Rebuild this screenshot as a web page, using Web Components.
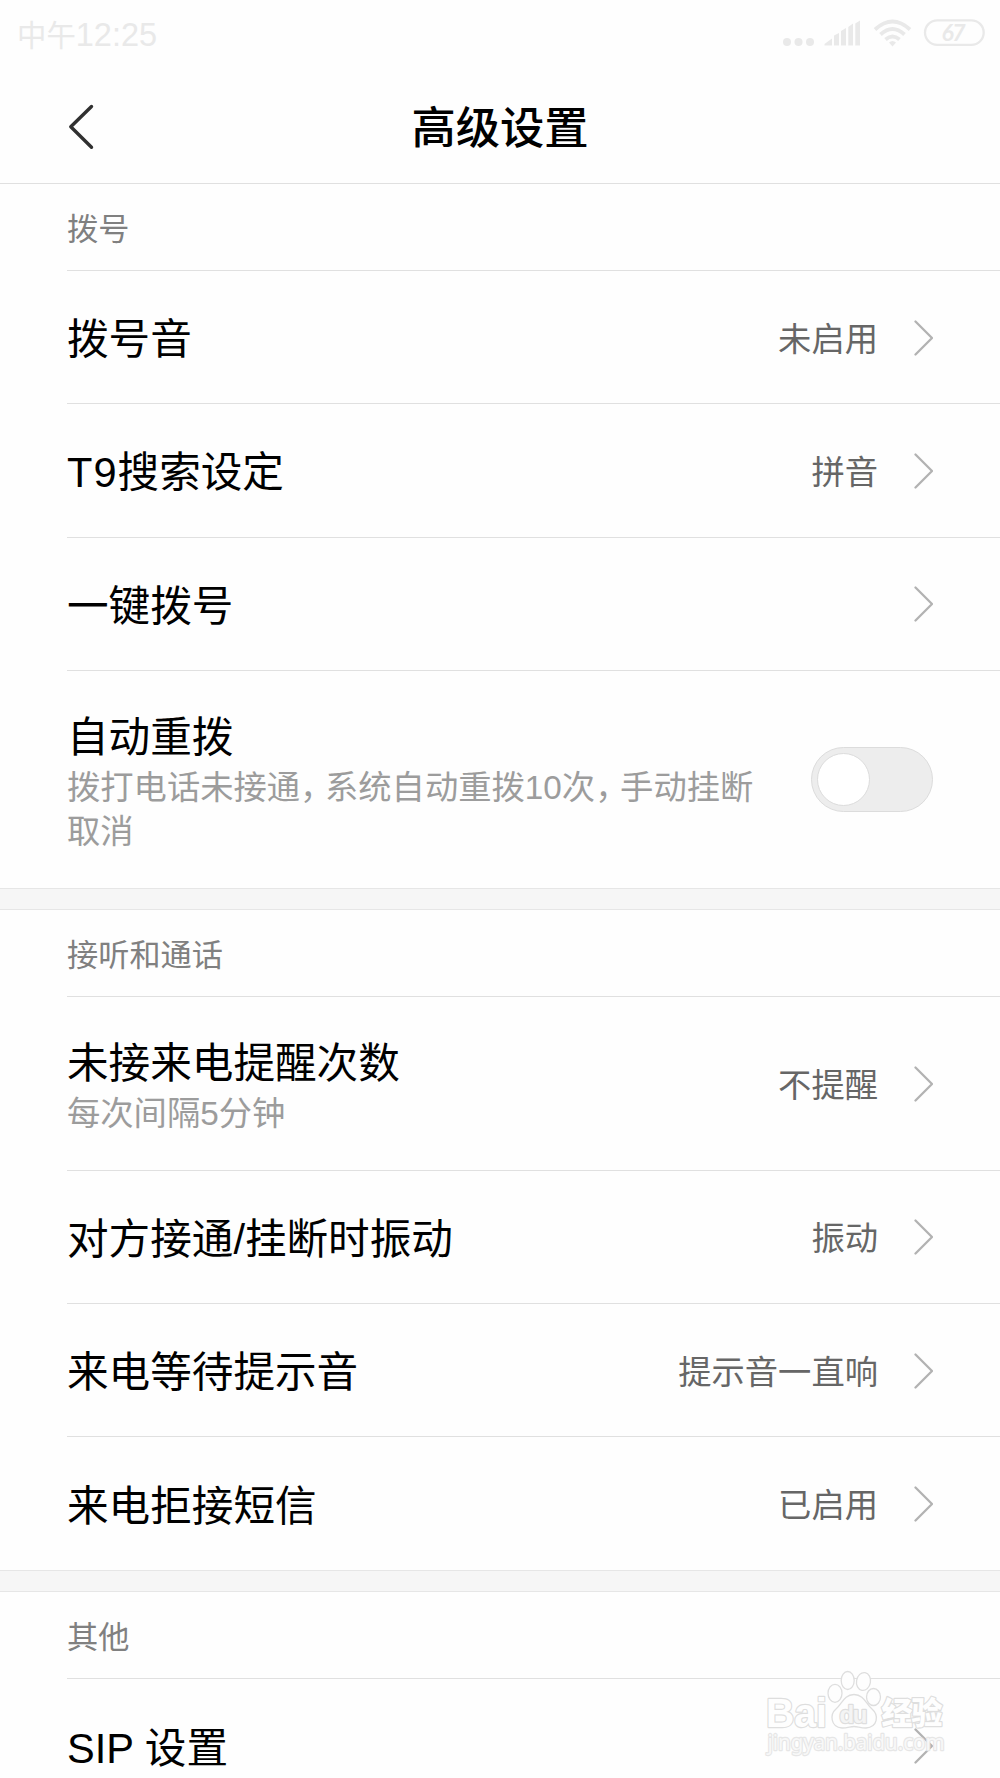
<!DOCTYPE html>
<html lang="zh-CN">
<head>
<meta charset="utf-8">
<title>高级设置</title>
<style>
  html, body {
    margin: 0;
    height: 1778px;
    overflow: hidden;
    background: #fefefe;
  }
  body {
    position: relative;
    font-family: "Liberation Sans", "Noto Sans CJK SC", sans-serif;
    color: #000;
  }
  .clock {
    font-size: 32.5px;
    line-height: 1;
  }
  /* Half-width comma with a little room after it */
  .comma {
    font-feature-settings: "halt";
    letter-spacing: 8.3px;
  }
</style>
</head>
<body>
<status-bar battery="67">中午<span class="clock">12:25</span></status-bar>
<page-header>高级设置</page-header>
<settings-group label="拨号">
  <settings-row value="未启用">拨号音</settings-row>
  <settings-row value="拼音"><span style="letter-spacing: 1px">T9</span>搜索设定</settings-row>
  <settings-row>一键拨号</settings-row>
  <settings-row type="switch" style="--row-height: 217px">自动重拨
    <span slot="desc">拨打电话未接通<span class="comma">，</span>系统自动重拨10次<span class="comma">，</span>手动挂断取消</span>
  </settings-row>
</settings-group>
<settings-group label="接听和通话" divided>
  <settings-row value="不提醒" style="--row-height: 173.67px">未接来电提醒次数
    <span slot="desc">每次间隔5分钟</span>
  </settings-row>
  <settings-row value="振动">对方接通/挂断时振动</settings-row>
  <settings-row value="提示音一直响">来电等待提示音</settings-row>
  <settings-row value="已启用" style="--row-height: 132.67px">来电拒接短信</settings-row>
</settings-group>
<settings-group label="其他" divided>
  <settings-row>SIP 设置</settings-row>
</settings-group>
<site-watermark></site-watermark>

<script>
class StatusBar extends HTMLElement {
  constructor() {
    super();
    this._root = this.attachShadow({ mode: "open" });
  }
  connectedCallback() {
    this._root.innerHTML = /*html*/ `
      <style>
        :host {
          display: flex;
          justify-content: space-between;
          align-items: center;
          height: 68px;
          box-sizing: border-box;
          padding: 0 15px 0 17px;
          font-size: 29.4px;
          line-height: 40px;
          color: #e9e9e9;
        }
        .time { padding-top: 3px; }
        svg { display: block; }
        .battery {
          font: italic 700 23px Lato, sans-serif;
        }
      </style>
      <div class="time"><slot></slot></div>
      <svg width="204" height="68" viewBox="781 0 204 68" fill="currentColor">
        <circle cx="787" cy="42" r="4"/>
        <circle cx="798.5" cy="42" r="4"/>
        <circle cx="810" cy="42" r="4"/>
        <path d="M824.5 45.5V44L832 38.5V45.5ZM834 45.5V35.5L839 33V45.5ZM841 45.5V31L846 28V45.5ZM848.3 45.5V27L853 23.5V45.5ZM855.3 45.5V23.5L860 20.5V45.5Z"/>
        <g fill="none" stroke="currentColor" stroke-width="3.8">
          <path d="M875 29.500Q892.500 13.500 910 29.500"/>
          <path d="M880.500 34.500Q892.500 23.500 904.500 34.500"/>
          <path d="M885.500 39.500Q892.500 33.500 899.500 39.500"/>
        </g>
        <path d="M889 42.500Q892.500 39.500 896 42.500L892.500 46.500Z"/>
        <rect x="925" y="20.300" width="58.700" height="24.600" rx="12.300" fill="#fefefe" stroke="currentColor" stroke-width="2.300"/>
        <text class="battery" x="941.500" y="41.200" textLength="24">${this.getAttribute("battery")}</text>
      </svg>
    `;
  }
}

class PageHeader extends HTMLElement {
  constructor() {
    super();
    this._root = this.attachShadow({ mode: "open" });
  }
  connectedCallback() {
    this._root.innerHTML = /*html*/ `
      <style>
        :host {
          display: grid;
          grid-template-columns: 100px 1fr 100px;
          align-items: center;
          height: 116px;
          box-sizing: border-box;
          border-bottom: 1px solid #e0e0e0;
        }
        svg { display: block; margin: 2px 0 0 67px; }
        h1 {
          margin: 0;
          padding-top: 6px;
          font-size: 44.3px;
          font-weight: 500;
          line-height: 60px;
          text-align: center;
        }
      </style>
      <svg width="28" height="46" viewBox="0 0 28 46" fill="none" stroke="#303030" stroke-width="3.4" stroke-linecap="round" stroke-linejoin="round">
        <path d="M24.500 2.500L3.800 22.800L24.500 43.200"/>
      </svg>
      <h1><slot></slot></h1>
    `;
  }
}

class SettingsGroup extends HTMLElement {
  constructor() {
    super();
    this._root = this.attachShadow({ mode: "open" });
  }
  connectedCallback() {
    this._root.innerHTML = /*html*/ `
      <style>
        :host { display: block; }
        /* Grey band above the group */
        :host([divided])::before {
          content: "";
          display: block;
          height: 20px;
          background: #f6f6f6;
          border-top: 1px solid #e6e6e6;
          border-bottom: 1px solid #e6e6e6;
        }
        .label {
          height: 86px;
          margin-left: 67px;
          border-bottom: 1px solid #e0e0e0;
          font-size: 31.2px;
          line-height: 91px;
          color: #808080;
        }
        ::slotted(:last-child) { --row-line: none; }
      </style>
      <div class="label">${this.getAttribute("label")}</div>
      <slot></slot>
    `;
  }
}

class SettingsRow extends HTMLElement {
  constructor() {
    super();
    this._root = this.attachShadow({ mode: "open" });
  }
  connectedCallback() {
    const isSwitch = this.getAttribute("type") === "switch";
    const value = this.getAttribute("value") || "";
    this._root.innerHTML = /*html*/ `
      <style>
        :host {
          display: flex;
          align-items: center;
          box-sizing: border-box;
          height: var(--row-height, 133.33px);
          margin-left: 67px;
          padding-right: 67px;
          border-bottom: var(--row-line, 1px solid #e0e0e0);
        }
        .text { flex: 1; padding-top: 6px; }
        .title {
          font-size: 41.6px;
          line-height: 56px;
        }
        ::slotted([slot="desc"]) {
          display: block;
          max-width: 702px;
          font-size: 33.3px;
          line-height: 44px;
          color: #9c9c9c;
        }
        .value {
          margin-right: 36px;
          padding-top: 5px;
          font-size: 33.3px;
          line-height: 44px;
          color: #666;
        }
        svg { display: block; margin-top: 1px; }
        .switch {
          box-sizing: border-box;
          width: 122px;
          height: 65px;
          padding: 6px 5px;
          border: 1px solid #dcdcdc;
          border-radius: 33px;
          background: #ededed;
        }
        .knob {
          box-sizing: border-box;
          width: 53px;
          height: 53px;
          margin-top: -1px;
          border: 1px solid #dcdcdc;
          border-radius: 50%;
          background: #fff;
        }
      </style>
      <div class="text">
        <div class="title"><slot></slot></div>
        <slot name="desc"></slot>
      </div>
      ${isSwitch ? `
        <div class="switch"><div class="knob"></div></div>
      ` : `
        <div class="value">${value}</div>
        <svg width="19" height="36" viewBox="0 0 19 36" fill="none" stroke="#b2b2b2" stroke-width="2.3" stroke-linecap="round" stroke-linejoin="round">
          <path d="M1.500 1.500L18 18L1.500 34.500"/>
        </svg>
      `}
    `;
  }
}

class SiteWatermark extends HTMLElement {
  constructor() {
    super();
    this._root = this.attachShadow({ mode: "open" });
  }
  connectedCallback() {
    this._root.innerHTML = /*html*/ `
      <style>
        :host {
          position: absolute;
          left: 760px;
          top: 1665px;
          pointer-events: none;
        }
        svg { display: block; }
        text {
          paint-order: stroke;
          stroke-width: 2.4px;
          stroke-linejoin: round;
        }
        .latin { font-family: "Liberation Sans", sans-serif; font-weight: 700; }
        .cjk { font-family: "Noto Sans CJK SC", sans-serif; font-weight: 900; }
        .url { font-family: "Noto Sans", sans-serif; }
      </style>
      <svg width="195" height="100" viewBox="760 1665 195 100" fill="#fefefe" stroke="#dedede" stroke-width="1.3">
        <text class="latin" x="766" y="1726.500" font-size="40" textLength="61" lengthAdjust="spacingAndGlyphs">Bai</text>
        <ellipse cx="835" cy="1693.300" rx="7" ry="9"/>
        <ellipse cx="847.700" cy="1680.500" rx="6.500" ry="9"/>
        <ellipse cx="863.500" cy="1681.500" rx="7" ry="9" transform="rotate(10 863.500 1681.500)"/>
        <ellipse cx="873.500" cy="1697" rx="7" ry="8.500"/>
        <path d="M854 1694.500C844 1694.500 842 1704 836 1709C830 1714 830 1727 842 1728C848 1728 850 1726.500 854 1726.500S860 1728 866 1728C878 1727 879 1715 872 1709C866 1704 864 1694.500 854 1694.500Z"/>
        <text class="latin" x="839.500" y="1722.500" font-size="24" textLength="28" fill="#f4f4f4">du</text>
        <text class="cjk" x="881.500" y="1724" font-size="31" textLength="61">经验</text>
        <text class="url" x="767.500" y="1750" font-size="21.500" textLength="177" lengthAdjust="spacingAndGlyphs" fill-opacity=".75" stroke="#e6e6e6">jingyan.baidu.com</text>
      </svg>
    `;
  }
}

window.customElements.define("status-bar", StatusBar);
window.customElements.define("page-header", PageHeader);
window.customElements.define("settings-group", SettingsGroup);
window.customElements.define("settings-row", SettingsRow);
window.customElements.define("site-watermark", SiteWatermark);
</script>
</body>
</html>
